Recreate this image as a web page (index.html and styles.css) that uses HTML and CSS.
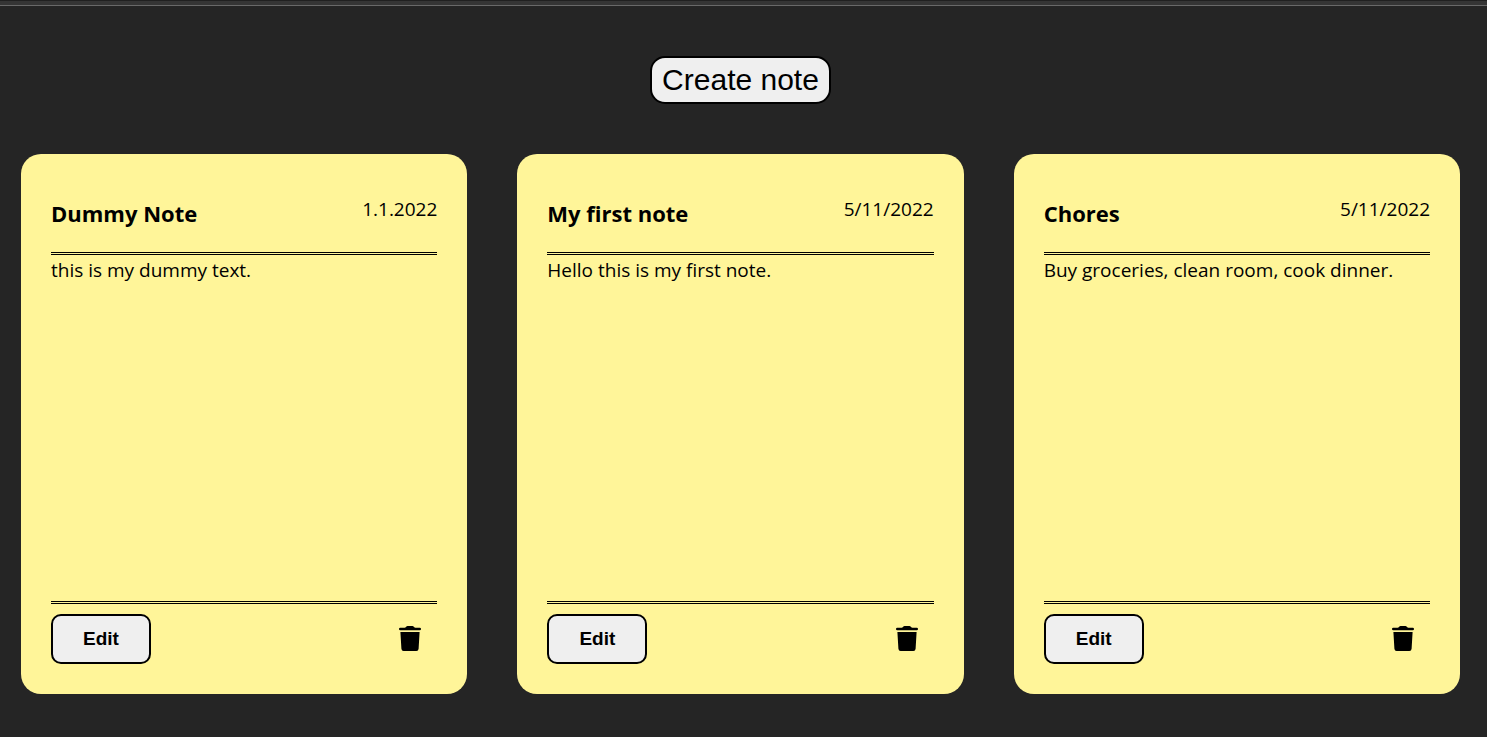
FILE: index.html
```html
<!DOCTYPE html>
<html lang="en">
<head>
<meta charset="utf-8">
<title>Notes</title>
<link rel="stylesheet" href="styles.css">
</head>
<body>
<div class="topbar"></div>
<header class="toolbar">
  <button class="create" type="button">Create note</button>
</header>
<main class="notes">
  <article class="note">
    <header class="note-head"><h2 class="note-title">Dummy Note</h2><time class="note-date">1.1.2022</time></header>
    <p class="note-text">this is my dummy text.</p>
    <footer class="note-foot">
      <button class="edit" type="button">Edit</button>
      <button class="trash" type="button" aria-label="Delete note"><svg class="trash-icon" viewBox="0 0 22 25" aria-hidden="true"><path d="M1.2 1.8H5.6Q6.4 1.8 7 1Q7.6 0 8.6 0H13.4Q14.4 0 15 1Q15.6 1.8 16.4 1.8H20.8Q22 1.8 22 3Q22 4.2 20.8 4.2H1.2Q0 4.2 0 3Q0 1.8 1.2 1.8ZM1.4 6H20.6L19.6 22.8Q19.4 25 17.4 25H4.6Q2.6 25 2.4 22.8Z"/></svg></button>
    </footer>
  </article>
  <article class="note">
    <header class="note-head"><h2 class="note-title">My first note</h2><time class="note-date">5/11/2022</time></header>
    <p class="note-text">Hello this is my first note.</p>
    <footer class="note-foot">
      <button class="edit" type="button">Edit</button>
      <button class="trash" type="button" aria-label="Delete note"><svg class="trash-icon" viewBox="0 0 22 25" aria-hidden="true"><path d="M1.2 1.8H5.6Q6.4 1.8 7 1Q7.6 0 8.6 0H13.4Q14.4 0 15 1Q15.6 1.8 16.4 1.8H20.8Q22 1.8 22 3Q22 4.2 20.8 4.2H1.2Q0 4.2 0 3Q0 1.8 1.2 1.8ZM1.4 6H20.6L19.6 22.8Q19.4 25 17.4 25H4.6Q2.6 25 2.4 22.8Z"/></svg></button>
    </footer>
  </article>
  <article class="note">
    <header class="note-head"><h2 class="note-title">Chores</h2><time class="note-date">5/11/2022</time></header>
    <p class="note-text">Buy groceries, clean room, cook dinner.</p>
    <footer class="note-foot">
      <button class="edit" type="button">Edit</button>
      <button class="trash" type="button" aria-label="Delete note"><svg class="trash-icon" viewBox="0 0 22 25" aria-hidden="true"><path d="M1.2 1.8H5.6Q6.4 1.8 7 1Q7.6 0 8.6 0H13.4Q14.4 0 15 1Q15.6 1.8 16.4 1.8H20.8Q22 1.8 22 3Q22 4.2 20.8 4.2H1.2Q0 4.2 0 3Q0 1.8 1.2 1.8ZM1.4 6H20.6L19.6 22.8Q19.4 25 17.4 25H4.6Q2.6 25 2.4 22.8Z"/></svg></button>
    </footer>
  </article>
</main>
</body>
</html>
```
FILE: styles.css
```css
* { box-sizing: border-box; }
body {
  margin: 0;
  background: #252525;
  color: #000;
  font-family: "Segoe UI", "Open Sans", "Noto Sans", sans-serif;
}
.topbar {
  height: 6px;
  background: #353535;
  border-top: 1px solid #202020;
  border-bottom: 1px solid #696969;
}
.toolbar {
  display: flex;
  justify-content: center;
  padding: 50px 26px 50px 20px;
}
.create {
  height: 48px;
  padding: 0 10px;
  border: 2px solid #000;
  border-radius: 15px;
  background: #efefef;
  color: #000;
  font: 30px/44px "Liberation Sans", Arial, sans-serif;
}
.notes {
  display: grid;
  grid-template-columns: repeat(3, 1fr);
  gap: 50px;
  padding: 0 27px 42px 21px;
}
.note {
  display: flex;
  flex-direction: column;
  min-height: 540px;
  padding: 30px;
  border-radius: 20px;
  background: #fff599;
}
.note-head {
  display: flex;
  justify-content: space-between;
  padding: 10px 0 20px;
  border-bottom: 3px double #000;
}
.note-title {
  margin: 0;
  font-size: 22px;
  line-height: 38px;
  font-weight: 700;
}
.note-date {
  font-size: 19px;
  line-height: 30px;
}
.note-text {
  flex: 1;
  margin: 0;
  font-size: 19px;
  line-height: 30px;
}
.note-foot {
  display: flex;
  justify-content: space-between;
  align-items: center;
  padding: 10px 16px 0 0;
  border-top: 3px double #000;
}
.edit {
  width: 100px;
  height: 50px;
  padding: 0 0 1px;
  border: 2px solid #000;
  border-radius: 10px;
  background: #efefef;
  color: #000;
  font: bold 19px/24px "Liberation Sans", Arial, sans-serif;
}
.trash {
  padding: 0 0 2px;
  border: 0;
  background: none;
  color: #000;
}
.trash-icon {
  display: block;
  width: 22px;
  height: 25px;
  fill: currentColor;
}
```
